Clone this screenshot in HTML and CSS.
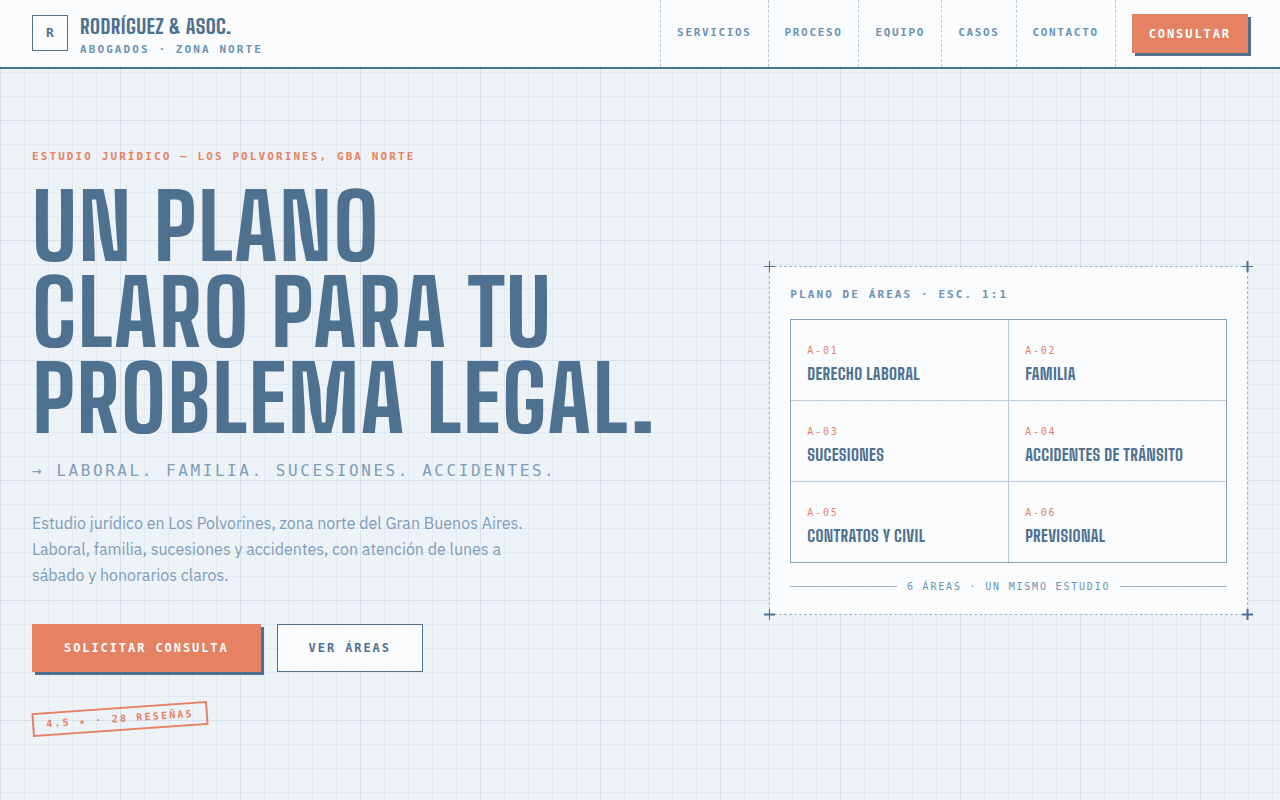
FILE: index.html
```html
<!DOCTYPE html>
<html lang="es">
<head>
<meta charset="utf-8">
<meta name="viewport" content="width=device-width, initial-scale=1">
<title>Rodríguez &amp; Asoc.</title>
<link rel="stylesheet" href="styles.css">
</head>
<body class="page">
<header class="header">
  <a class="brand" href="#">
    <span class="brand-mark">R</span>
    <span class="brand-text">
      <span class="brand-name">RODRÍGUEZ &amp; ASOC.</span>
      <span class="brand-sub">ABOGADOS · ZONA NORTE</span>
    </span>
  </a>
  <nav class="nav">
    <a class="nav-link" href="#areas">SERVICIOS</a>
    <a class="nav-link" href="#proceso">PROCESO</a>
    <a class="nav-link" href="#equipo">EQUIPO</a>
    <a class="nav-link" href="#casos">CASOS</a>
    <a class="nav-link" href="#contacto">CONTACTO</a>
    <div class="nav-action"><button class="btn btn-small btn-primary" type="button">CONSULTAR</button></div>
  </nav>
</header>
<main class="hero">
  <section class="intro">
    <p class="label eyebrow">ESTUDIO JURÍDICO — LOS POLVORINES, GBA NORTE</p>
    <h1 class="headline">UN PLANO<br>CLARO PARA TU<br>PROBLEMA LEGAL.</h1>
    <p class="tagline">→ LABORAL. FAMILIA. SUCESIONES. ACCIDENTES.</p>
    <p class="lead">Estudio jurídico en Los Polvorines, zona norte del Gran Buenos Aires. Laboral, familia, sucesiones y accidentes, con atención de lunes a sábado y honorarios claros.</p>
    <div class="actions">
      <button class="btn btn-primary" type="button">SOLICITAR CONSULTA</button>
      <button class="btn btn-outline" type="button">VER ÁREAS</button>
    </div>
    <p class="stamp">4.5 ★ · 28 RESEÑAS</p>
  </section>
  <section class="plan" id="areas">
    <svg class="cross cross-tl" viewBox="0 0 11 11"><path d="M0 5.5h11M5.5 0v11" stroke-width="1"/></svg>
    <svg class="cross cross-tr" viewBox="0 0 11 11"><path d="M0 5.5h11" stroke-width="1"/><path d="M5.5 0v11" stroke-width="2"/></svg>
    <svg class="cross cross-bl" viewBox="0 0 11 11"><path d="M0 5.5h11" stroke-width="2"/><path d="M5.5 0v11" stroke-width="1"/></svg>
    <svg class="cross cross-br" viewBox="0 0 11 11"><path d="M0 5.5h11M5.5 0v11" stroke-width="2"/></svg>
    <h2 class="label plan-title">PLANO DE ÁREAS · ESC. 1:1</h2>
    <ul class="areas">
      <li class="area"><span class="area-code">A-01</span><span class="area-name">DERECHO LABORAL</span></li>
      <li class="area"><span class="area-code">A-02</span><span class="area-name">FAMILIA</span></li>
      <li class="area"><span class="area-code">A-03</span><span class="area-name">SUCESIONES</span></li>
      <li class="area"><span class="area-code">A-04</span><span class="area-name">ACCIDENTES DE TRÁNSITO</span></li>
      <li class="area"><span class="area-code">A-05</span><span class="area-name">CONTRATOS Y CIVIL</span></li>
      <li class="area"><span class="area-code">A-06</span><span class="area-name">PREVISIONAL</span></li>
    </ul>
    <p class="plan-note">6 ÁREAS · UN MISMO ESTUDIO</p>
  </section>
</main>
</body>
</html>
```
FILE: styles.css
```css
:root {
  --ink: #4f7190;
  --steel: #6a93b5;
  --mist: #7f9db9;
  --coral: #e58264;
  --paper: #fbfcfe;
  --ground: #edf2f7;
  --mono: "DejaVu Sans Mono", monospace;
  --display: "Big Shoulders Text", "Big Shoulders Display", "Liberation Sans Narrow", "Roboto", sans-serif;
  --sans: "IBM Plex Sans", "Roboto", sans-serif;
}

*, *::before, *::after { box-sizing: border-box; }

.page {
  margin: 0;
  min-height: 100vh;
  color: var(--ink);
  font-family: var(--sans);
  background-color: var(--ground);
  background-image:
    linear-gradient(rgba(79, 125, 160, .08) 1px, transparent 1px),
    linear-gradient(90deg, rgba(79, 125, 160, .08) 1px, transparent 1px),
    linear-gradient(rgba(79, 125, 160, .04) 1px, transparent 1px),
    linear-gradient(90deg, rgba(79, 125, 160, .04) 1px, transparent 1px);
  background-size: 120px 120px, 120px 120px, 24px 24px, 24px 24px;
}

/* Faint drafting grid over every surface */
.page::after {
  content: "";
  position: fixed;
  inset: 0;
  z-index: 10;
  pointer-events: none;
  background-image:
    linear-gradient(rgba(50, 80, 110, .02) 1px, transparent 1px),
    linear-gradient(90deg, rgba(50, 80, 110, .02) 1px, transparent 1px);
  background-size: 24px 24px;
}

.header {
  display: flex;
  justify-content: space-between;
  min-height: 69px;
  padding: 0 32px;
  background: var(--paper);
  border-bottom: 2px solid var(--ink);
}

.brand {
  display: flex;
  align-items: center;
  gap: 12px;
  padding-bottom: 1px;
  color: inherit;
  text-decoration: none;
}

.brand-mark {
  display: grid;
  place-items: center;
  width: 36px;
  height: 36px;
  border: 1px solid var(--ink);
  font: bold 13px/16px var(--mono);
}

.brand-text {
  display: grid;
  gap: 4px;
  padding-top: 3px;
}

.brand-name {
  font: 800 20px/26px var(--display);
  letter-spacing: .02em;
}

.brand-sub, .label {
  font: bold 11px/13px var(--mono);
  letter-spacing: .19em;
  color: var(--steel);
}

.nav { display: flex; }

.nav-link {
  display: flex;
  align-items: center;
  padding: 0 16px 2px;
  border-left: 1px dashed #bccbd9;
  color: var(--steel);
  font: bold 11px/13px var(--mono);
  letter-spacing: .15em;
  text-decoration: none;
}

.nav-action {
  display: flex;
  align-items: center;
  padding-left: 16px;
  border-left: 1px dashed #bccbd9;
}

.btn {
  min-height: 48px;
  padding: 0 31px;
  border: 1px solid var(--ink);
  border-radius: 0;
  font: bold 12px/14px var(--mono);
  letter-spacing: .16em;
  cursor: pointer;
}

.btn-primary {
  color: #fff;
  background: var(--coral);
  border-color: var(--coral);
  box-shadow: 3px 3px 0 var(--ink);
}

.btn-outline { color: var(--ink); background: var(--paper); }

.btn-small {
  min-height: 39px;
  padding: 0 16px;
}

.hero {
  display: grid;
  grid-template-columns: minmax(0, 1.44fr) minmax(0, 1fr);
  align-items: center;
  gap: 48px;
  padding: 81px 32px 64px;
}

.eyebrow { margin: 0; }

.label.eyebrow { color: var(--coral); }

.headline {
  margin: 20px 0 0;
  font: 800 90px/86px var(--display);
  letter-spacing: .015em;
  white-space: nowrap;
}

.tagline {
  margin: 18px 0 0;
  color: var(--mist);
  font: 16px/24px var(--mono);
  letter-spacing: .16em;
}

.lead {
  max-width: 500px;
  margin: 27px 0 0;
  color: var(--mist);
  font-size: 16px;
  line-height: 26px;
}

.actions { display: flex; gap: 16px; margin-top: 36px; }

.stamp {
  width: fit-content;
  margin: 35px 0 0;
  padding: 4px 12px;
  border: 2px solid var(--coral);
  color: var(--coral);
  font: bold 10px/12px var(--mono);
  letter-spacing: .22em;
  transform: rotate(-4deg);
}

.plan {
  position: relative;
  padding: 20px;
  background: var(--paper);
  border: 1px dashed #a0b7cb;
}

.cross {
  position: absolute;
  width: 11px;
  height: 11px;
  stroke: var(--ink);
}

.cross-tl { top: -6px; left: -6px; }
.cross-tr { top: -6px; right: -6px; }
.cross-bl { bottom: -6px; left: -6px; }
.cross-br { bottom: -6px; right: -6px; }

.label.plan-title {
  margin: 0 0 17px;
  line-height: 15px;
}

.areas {
  display: grid;
  grid-template-columns: 1fr 1fr;
  gap: 1px;
  margin: 0;
  padding: 0;
  list-style: none;
  background: #bccddb;
  border: 1px solid #84a1bb;
}

.area {
  display: grid;
  gap: 7px;
  padding: 25px 16px 16px;
  background: var(--paper);
}

.area-code {
  color: var(--coral);
  font: 10px/12px var(--mono);
  letter-spacing: .18em;
}

.area-name {
  font: 800 16px/20px var(--display);
  letter-spacing: .02em;
}

.plan-note {
  display: flex;
  align-items: center;
  gap: 10px;
  margin: 16px 0 0;
  color: var(--steel);
  font: 10px/15px var(--mono);
  letter-spacing: .18em;
}

.plan-note::before, .plan-note::after {
  content: "";
  flex: 1;
  height: 1px;
  background: #9db6ca;
}

@media (max-width: 1000px) {
  .header { flex-wrap: wrap; }
  .nav { flex-wrap: wrap; }
  .hero { grid-template-columns: minmax(0, 1fr); }
  .headline { white-space: normal; }
}
```
